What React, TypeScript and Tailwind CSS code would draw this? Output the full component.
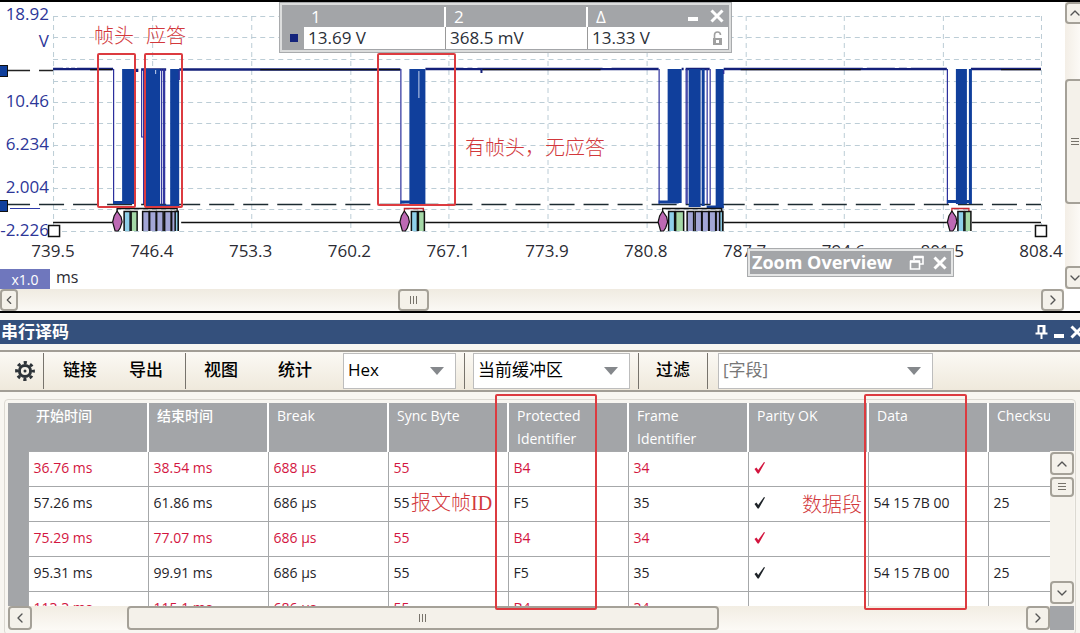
import { useState } from 'react';
import type { ReactNode } from 'react';
import { ChevronDown, ChevronLeft, ChevronRight, ChevronUp } from 'lucide-react';

const voltTicks = ['10.46', '6.234', '2.004', '-2.226'];
const timeTicks = ['739.5', '746.4', '753.3', '760.2', '767.1', '773.9', '780.8', '787.7', '794.6', '801.5', '808.4'];

const gridX = [53, 152, 251, 350, 448, 547, 646, 745, 843, 942, 1040];
const gridY = [16, 37, 59, 81, 102, 123, 145, 167, 188, 209, 231];

// [x, width, top, bottom] of the solid parts of the bus signal
const bursts = [
  [122, 13, 69, 203], [145, 15, 69, 207], [170, 9, 69, 207],
  [409, 16, 69, 204],
  [667, 14, 69, 203], [688, 12, 69, 207], [701, 3, 69, 206], [715, 8, 69, 208],
  [955, 11, 69, 204], [968, 3, 69, 204],
];
const edges = [113, 143, 161, 163, 164, 400, 658, 685, 686, 706, 709, 946];

const packets = [
  { break: 117, frames: [[124, 6, '#8fd0ea'], [131, 6, '#a5d8a7']], data: [142, 149, 156, 164, 171], end: 177, color: '#111' },
  { break: 404, frames: [[411, 6, '#8fd0ea'], [418, 6, '#a5d8a7']], data: [], end: 423, color: '#c8252c' },
  { break: 662, frames: [[668, 6, '#8fd0ea'], [675, 8, '#a5d8a7']], data: [686, 694, 701, 708, 715], end: 721, color: '#111' },
  { break: 951, frames: [[957, 6, '#8fd0ea'], [964, 6, '#a5d8a7']], data: [], end: 968, color: '#c8252c' },
] as { break: number; frames: [number, number, string][]; data: number[]; end: number; color: string }[];

const columns = ['开始时间', '结束时间', 'Break', 'Sync Byte', 'Protected Identifier', 'Frame Identifier', 'Parity OK', 'Data', 'Checksum'];
const rows = [
  { error: true, cells: ['36.76 ms', '38.54 ms', '688 µs', '55', 'B4', '34', '✓', '', ''] },
  { error: false, cells: ['57.26 ms', '61.86 ms', '686 µs', '55', 'F5', '35', '✓', '54 15 7B 00', '25'] },
  { error: true, cells: ['75.29 ms', '77.07 ms', '686 µs', '55', 'B4', '34', '✓', '', ''] },
  { error: false, cells: ['95.31 ms', '99.91 ms', '686 µs', '55', 'F5', '35', '✓', '54 15 7B 00', '25'] },
  { error: true, cells: ['113.3 ms', '115.1 ms', '686 µs', '55', 'B4', '34', '', '', ''] },
];

function ScrollButton({ label, className, children }: { label: string; className: string; children: ReactNode }) {
  return (
    <button aria-label={label} className={`flex shrink-0 items-center justify-center rounded-sm border-2 border-[#a5a198] bg-[#f4f1ea] text-[#555] ${className}`}>
      {children}
    </button>
  );
}

function Grip({ vertical = false }: { vertical?: boolean }) {
  return (
    <svg width="10" height="10" className={vertical ? 'rotate-90' : ''} aria-hidden="true">
      <path d="M1.5 1v8M4.5 1v8M7.5 1v8" stroke="#77736b" strokeWidth="1" />
    </svg>
  );
}

function Cross({ size, width }: { size: number; width: number }) {
  return (
    <svg width={size} height={size} viewBox="0 0 14 14" aria-hidden="true">
      <path d="M1.5 1.5 12.5 12.5M12.5 1.5 1.5 12.5" stroke="currentColor" strokeWidth={width} />
    </svg>
  );
}

function Trace() {
  return (
    <svg viewBox="0 2 1064 236" preserveAspectRatio="none" className="absolute inset-x-0 top-0 h-[236px] w-full" aria-hidden="true">
      <g stroke="#bccdd6" strokeWidth="1" strokeDasharray="5 4">
        {gridX.map((x) => <path key={x} d={`M${x + 0.5} 16V232`} />)}
        {gridY.map((y) => <path key={y} d={`M53 ${y + 0.5}H1040`} />)}
      </g>

      {/* cursors */}
      <path d="M7 70.5H30M39 70.5H53" stroke="#222" strokeWidth="1.5" />
      <path d="M5 204.5H1040" stroke="#1c2a30" strokeWidth="1.6" strokeDasharray="25 9" />
      <rect x="-3" y="65.5" width="10.5" height="11" fill="#103f9c" stroke="#111" />
      <rect x="-3" y="200.5" width="10.5" height="11" fill="#103f9c" stroke="#111" />
      <path d="M10 208.5H40" stroke="#2d3aa8" />

      {/* idle level */}
      <path d="M53 69H113M135 70H137V72M141 69.5H166M179 69.5H400M425 69H658M681 69H683M685 69H709M723 69H946M970 69H1040" fill="none" stroke="#14207a" strokeWidth="2.4" />
      <path d="M90 69.6H112M260 69.6H400M480 69.6H600M740 69.6H860M1000 69.6H1040" stroke="#111" strokeWidth="1.2" />
      <path d="M63 67.5h3M69 67.5h2M75 67.5h2M357 67.5h6M366 67.5h5M463 67.5h4M472 67.5h5M602 67.5h9M862 67.5h4M894 67.5h4M906 67.5h4" stroke="#fff" />
      <path d="M481 69v4" stroke="#14207a" strokeWidth="2" />

      {edges.map((x) => <path key={x} d={`M${x + 0.5} 69V204`} stroke="#2b2f9c" strokeWidth="1.2" />)}
      <path d="M141.5 70V137H143" fill="none" stroke="#2b2f9c" strokeWidth="1.2" />
      {bursts.map(([x, w, top, bottom]) => <rect key={x} x={x} y={top} width={w} height={bottom - top} fill="#103f9c" />)}
      <path d="M113 202.5H134M400 202H424M658 202H678M946 201.5H970M145 206H179M706 207H723" stroke="#103f9c" strokeWidth="3" />
      <path d="M418.5 71V98M155.5 70V74" stroke="#c6d3ee" />
      <path d="M179 70V80M723 70V74" stroke="#2b2f9c" strokeWidth="1.4" />

      {/* decoded frames on the bus line */}
      <path d="M53 222.5H112M181 222.5H400M425 222.5H658M723 222.5H946M971 222.5H1040" stroke="#111" strokeWidth="1.4" />
      {packets.map((p) => (
        <g key={p.break}>
          <path d={`M${p.break} 213V208.5H${p.end}V213`} fill="none" stroke={p.color} strokeWidth="1.3" />
          <path d={`M${p.break} 211L${p.break + 4} 217L${p.break + 5} 222L${p.break + 3} 228L${p.break + 1} 231H${p.break - 2}L${p.break - 4.5} 222L${p.break - 3} 216Z`} fill="#bd69b4" stroke="#111" strokeWidth="1.2" />
          {p.frames.map(([x, w, fill]) => <path key={x} d={`M${x} 231V211.5H${x + w}V231`} fill={fill} stroke="#111" strokeWidth="1.5" />)}
          {p.data.map((x) => <path key={x} d={`M${x + 0.5} 231V211.5H${x + 7}V231`} fill="#a3a6d6" stroke="#111" strokeWidth="1.5" />)}
          {p.data.length > 0 && <path d={`M${p.end - 2} 231V211.5H${p.end + 1}V231`} fill="#8fd0ea" stroke="#111" strokeWidth="1.5" />}
        </g>
      ))}
      <rect x="48.5" y="225.5" width="11" height="11" fill="#fff" stroke="#111" strokeWidth="1.5" />
      <rect x="1034.5" y="225.5" width="11" height="11" fill="#fff" stroke="#111" strokeWidth="1.5" />
    </svg>
  );
}

function MeasureWindow() {
  return (
    <div className="absolute left-[279px] top-0.5 flex h-[51px] w-[453px] border border-[#a9abad] bg-[#dcdddd] p-0.5 text-[17px]">
      <div className="flex w-full flex-col border border-[#a3a5a8]">
        <div className="flex h-6 items-end bg-[#a3a5a8] leading-5 text-white">
          <span className="w-[163px] border-r-2 border-white pl-7">1</span>
          <span className="w-[142px] border-r-2 border-white pl-2">2</span>
          <span className="flex-1 pl-2">Δ</span>
          <button aria-label="最小化" className="mb-1.5 mr-3 h-1 w-2.5 bg-white" />
          <button aria-label="关闭" className="mb-1 mr-1"><Cross size={14} width={3} /></button>
        </div>
        <div className="flex flex-1 items-center bg-white text-[#2b2f38]">
          <span className="flex w-[21px] items-center justify-center self-stretch bg-[#a3a5a8]"><i className="size-2 bg-[#14247c]" /></span>
          <span className="w-[142px] self-stretch border-r border-[#999] pl-1 leading-[22px]">13.69 V</span>
          <span className="w-[142px] self-stretch border-r border-[#999] pl-1 leading-[22px]">368.5 mV</span>
          <span className="flex-1 pl-1 leading-[22px]">13.33 V</span>
          <svg width="12" height="15" viewBox="0 0 12 15" className="mr-1" aria-hidden="true">
            <path d="M2.5 7V4a3 3 0 0 1 6 0" fill="none" stroke="#a0a0a0" strokeWidth="1.6" />
            <rect x="1" y="7" width="9" height="7" fill="#a0a0a0" />
            <rect x="4" y="9" width="3" height="3" fill="#fff" />
          </svg>
        </div>
      </div>
    </div>
  );
}

function ZoomOverview() {
  return (
    <div className="absolute left-[747px] top-[248px] h-[29px] w-[207px] border border-[#a9abad] bg-[#e4e5e5] p-0.5">
      <div className="flex h-full items-center bg-[#a3a5a8] pl-0.5 pr-1 text-white">
        <span className="flex-1 text-[18px] font-bold">Zoom Overview</span>
        <button aria-label="还原" className="mr-2">
          <svg width="16" height="16" viewBox="0 0 16 16" aria-hidden="true">
            <path d="M5 5V2H14V9H11M1.5 6.5H10.5V14H1.5Z" fill="none" stroke="currentColor" strokeWidth="1.6" />
            <path d="M4.5 2H14.5M1 6.5H11" stroke="currentColor" strokeWidth="2.4" />
          </svg>
        </button>
        <button aria-label="关闭"><Cross size={14} width={3} /></button>
      </div>
    </div>
  );
}

function Picker({ label, options, className }: { label: string; options: string[]; className: string }) {
  const [value, setValue] = useState(options[0]);
  return (
    <div className={`relative h-9 ${className}`}>
      <select aria-label={label} value={value} onChange={(e) => setValue(e.target.value)} className="size-full appearance-none border border-[#bdbdbd] bg-white pb-0.5 pl-1 pr-7">
        {options.map((o) => <option key={o}>{o}</option>)}
      </select>
      <svg width="14" height="8" className="pointer-events-none absolute right-3 top-3.5" aria-hidden="true"><path d="M0 0H14L7 8Z" fill="#85888c" /></svg>
    </div>
  );
}

function Divider() {
  return <span className="h-9 w-px shrink-0 bg-[#77736c]" />;
}

function Toolbar() {
  return (
    <div className="flex h-[42px] items-center border-y-2 border-[#a29e96] bg-linear-to-b from-[#fbf9f4] to-[#efe9dc] text-[17px] text-black">
      <button aria-label="设置" className="flex w-[43px] shrink-0 justify-center pl-1.5">
        <svg width="20" height="20" viewBox="0 0 20 20" aria-hidden="true">
          <circle cx="10" cy="10" r="5.6" fill="none" stroke="#2d3338" strokeWidth="3" />
          <circle cx="10" cy="10" r="8.4" fill="none" stroke="#2d3338" strokeWidth="3" strokeDasharray="3.2 3.4" strokeDashoffset="1.6" />
          <circle cx="10" cy="10" r="1.5" fill="#2d3338" />
        </svg>
      </button>
      <Divider />
      <div className="flex shrink-0 px-[3px] pb-0.5 font-medium">
        <button className="w-[66px]">链接</button>
        <button className="w-[66px]">导出</button>
      </div>
      <span className="w-[3px] shrink-0" />
      <Divider />
      <div className="flex shrink-0 gap-2 px-0.5 pb-0.5 font-medium">
        <button className="w-[66px]">视图</button>
        <button className="w-[66px]">统计</button>
      </div>
      <Picker label="进制" options={['Hex', 'Binary', 'Decimal', 'ASCII']} className="ml-[13px] mr-2 w-[113px] shrink-0" />
      <Divider />
      <Picker label="缓冲区" options={['当前缓冲区', '所有缓冲区']} className="mx-2 w-[157px] shrink-0" />
      <Divider />
      <button className="w-[68px] shrink-0 pb-0.5 font-medium">过滤</button>
      <Divider />
      <Picker label="字段" options={['[字段]', ...columns]} className="ml-2.5 w-[215px] text-[#777]" />
    </div>
  );
}

function DecodeTable() {
  return (
    <div className="mx-1 rounded-sm border border-[#dcd9d2] pb-1 pl-[3px] pr-px pt-[3px]">
      <div className="flex h-[203px]">
        <div className="min-w-0 flex-1 overflow-hidden bg-white">
          <table className="w-[1100px] table-fixed border-collapse text-left text-[14px] font-medium">
            <colgroup>
              <col className="w-5" />
              {columns.map((c) => <col key={c} className="w-[120px]" />)}
            </colgroup>
            <thead>
              <tr className="h-12 bg-[#a3a5a8] align-top leading-[23px] text-white">
                <th aria-label="#" />
                {columns.map((c, i) => (
                  <th key={c} className={i ? 'border-l-2 border-white pl-2 pr-4 pt-px font-medium' : 'pl-2 pt-px font-medium'}>{c}</th>
                ))}
              </tr>
            </thead>
            <tbody>
              {rows.map((r) => (
                <tr key={r.cells[0]} className={r.error ? 'h-[35px] text-[#d3163f]' : 'h-[35px] text-[#1f2429]'}>
                  <td className="bg-[#a3a5a8]" />
                  {r.cells.map((cell, i) => (
                    <td key={i} className="border border-[#a6a8aa] pb-0.5 pl-[5px]">
                      {cell === '✓' ? (
                        <svg width="12" height="13" viewBox="0 0 12 13" role="img" aria-label="OK"><path d="M0.5 8 2.5 6.5 4.2 9 10 1 11 1.5 4.8 12.5H3.6Z" fill="currentColor" /></svg>
                      ) : cell}
                    </td>
                  ))}
                </tr>
              ))}
            </tbody>
          </table>
        </div>
        <div className="flex w-6 shrink-0 flex-col bg-[#f6f3ed]">
          <div className="mb-px h-12 bg-[#a3a5a8]" />
          <ScrollButton label="向上滚动" className="h-[23px] w-6"><ChevronUp size={16} /></ScrollButton>
          <ScrollButton label="垂直滑块" className="mt-0.5 h-5 w-6"><Grip vertical /></ScrollButton>
          <ScrollButton label="向下滚动" className="mb-0.5 mt-auto h-[23px] w-6"><ChevronDown size={16} /></ScrollButton>
        </div>
      </div>
      <div className="flex h-6 bg-linear-to-b from-[#f2ede3] to-[#fcfaf6]">
        <ScrollButton label="向左滚动" className="w-6"><ChevronLeft size={16} /></ScrollButton>
        <div className="flex flex-1 pl-[95px]">
          <ScrollButton label="水平滑块" className="w-[592px]"><Grip /></ScrollButton>
        </div>
        <ScrollButton label="向右滚动" className="w-6"><ChevronRight size={16} /></ScrollButton>
        <span className="w-6 bg-[#a3a5a8]" />
      </div>
    </div>
  );
}

function Scope() {
  return (
    <section className="border-y-2 border-black bg-white">
      <div className="flex">
        <div className="relative min-w-0 flex-1">
          <Trace />
          <div className="relative flex h-[237px] w-[49px] flex-col text-[17px] leading-6 text-[#2d3698]">
            <span className="flex h-[27px] shrink-0 justify-end">18.92</span>
            <span className="flex h-[60px] shrink-0 justify-end">V</span>
            {voltTicks.map((t) => <span key={t} className="flex h-[43px] shrink-0 justify-end whitespace-nowrap">{t}</span>)}
          </div>
          <div className="relative ml-[53px] mr-6 flex h-[30px] justify-between text-[17px] leading-6 text-[#2b2b33]">
            {timeTicks.map((t) => <span key={t} className="flex w-0 justify-center">{t}</span>)}
          </div>
          <div className="relative flex h-5 gap-1.5 text-[#2b2b33]">
            <span className="flex w-[50px] items-center justify-center bg-[#6f77bd] text-[14px] text-white">x1.0</span>
            <span className="text-[16px] leading-4">ms</span>
          </div>
        </div>
        <div className="flex w-[15px] shrink-0 flex-col overflow-hidden bg-linear-to-r from-[#f3eee6] to-[#fcfaf6]">
          <ScrollButton label="向上滚动" className="h-[22px] w-5"><ChevronUp size={16} /></ScrollButton>
          <ScrollButton label="电压滑块" className="mt-[55px] h-[125px] w-5"><Grip vertical /></ScrollButton>
          <ScrollButton label="向下滚动" className="mt-auto h-[23px] w-5"><ChevronDown size={16} /></ScrollButton>
        </div>
      </div>
      <div className="mr-4 flex h-[22px] bg-linear-to-b from-[#f0ebe1] to-[#fbf9f5]">
        <ScrollButton label="向左滚动" className="w-[18px]"><ChevronLeft size={16} /></ScrollButton>
        <div className="flex flex-1 justify-start pl-[380px]">
          <ScrollButton label="时间滑块" className="w-[31px]"><Grip /></ScrollButton>
        </div>
        <ScrollButton label="向右滚动" className="w-[23px]"><ChevronRight size={16} /></ScrollButton>
      </div>
    </section>
  );
}

function Annotations() {
  return (
    <div className="pointer-events-none absolute inset-0 font-['Liberation_Serif','Noto_Sans_CJK_SC',serif] text-[20px] font-light leading-6 text-[#d2383c]">
      <span className="absolute left-[94px] top-6">帧头</span>
      <span className="absolute left-[146px] top-6">应答</span>
      <span className="absolute left-[465px] top-[136px]">有帧头，无应答</span>
      <span className="absolute left-[411px] top-[491px]">报文帧ID</span>
      <span className="absolute left-[802px] top-[493px]">数据段</span>
      <i className="absolute left-[97px] top-[53px] h-[155px] w-[39px] rounded-xs border-2 border-[#dc3b40]" />
      <i className="absolute left-[144px] top-[53px] h-[155px] w-[39px] rounded-xs border-2 border-[#dc3b40]" />
      <i className="absolute left-[377px] top-[53px] h-[153px] w-[79px] rounded-xs border-2 border-[#dc3b40]" />
      <i className="absolute left-[495px] top-[394px] h-[216px] w-[102px] rounded-xs border-2 border-[#dc3b40]" />
      <i className="absolute left-[864px] top-[394px] h-[216px] w-[103px] rounded-xs border-2 border-[#dc3b40]" />
    </div>
  );
}

export default function App() {
  return (
    <main className="relative w-full overflow-hidden bg-[#f8f6f1] font-['Open_Sans','Noto_Sans_CJK_SC',sans-serif]">
      <Scope />
      <section className="pt-[7px]">
        <header className="mb-1.5 flex h-6 items-center overflow-hidden bg-[#34507c] pl-px text-white">
          <h2 className="flex-1 text-[17px] font-bold leading-6">串行译码</h2>
          <div className="-mr-1 flex items-center gap-1.5">
            <button aria-label="固定">
              <svg width="13" height="16" viewBox="0 0 13 16" aria-hidden="true">
                <path d="M3.5 9V2H9.5V9M0.5 9.5H12.5M6.5 9V15" fill="none" stroke="currentColor" strokeWidth="2" />
                <path d="M8.5 2V9" stroke="currentColor" strokeWidth="2" />
              </svg>
            </button>
            <button aria-label="最小化" className="mt-2 h-1 w-2.5 bg-white" />
            <button aria-label="关闭"><Cross size={14} width={3} /></button>
          </div>
        </header>
        <Toolbar />
        <div className="pb-1 pt-[7px]"><DecodeTable /></div>
      </section>
      <MeasureWindow />
      <ZoomOverview />
      <Annotations />
    </main>
  );
}
